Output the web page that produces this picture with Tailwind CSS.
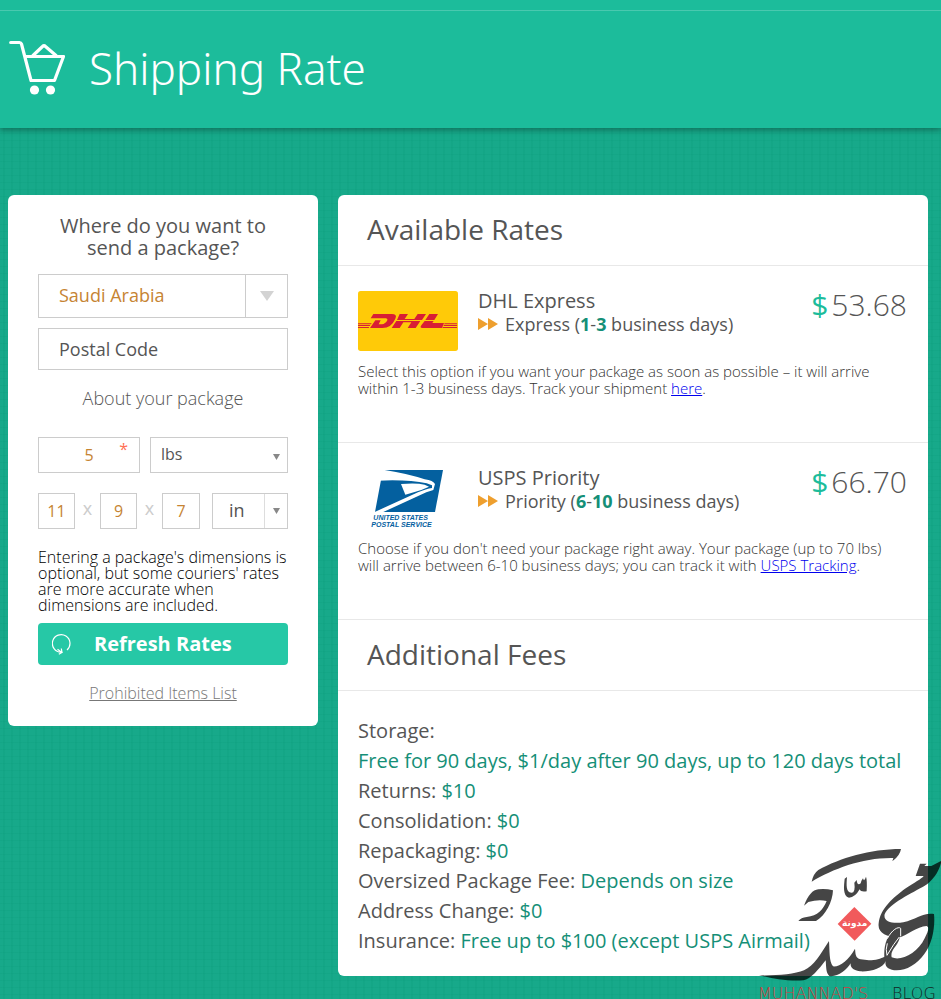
<!DOCTYPE html>
<html lang="en">
<head>
<meta charset="utf-8">
<meta name="viewport" content="width=device-width, initial-scale=1">
<title>Shipping Rate</title>
<script src="https://cdn.jsdelivr.net/npm/@tailwindcss/browser@4"></script>
</head>
<body class="bg-[#17a98a] font-['Open_Sans',sans-serif] font-light text-[#555]">
<div class="relative min-h-screen overflow-hidden bg-[linear-gradient(to_right,#0c9c7d40_2px,transparent_2px),linear-gradient(to_bottom,#0c9c7d40_1px,transparent_1px)] bg-[size:8px_7px] bg-[position:3px_0px]">
  <header class="relative bg-[#1cbc9b] pt-[10px] shadow-[0_2px_6px_rgba(0,0,0,0.35)]">
    <div class="flex h-[118px] items-center gap-6 border-t border-[#49c9af] pb-1 pl-[9px]">
      <svg class="h-[56px] w-[56px]" viewBox="0 0 56 56" fill="none" stroke="#fff" stroke-width="3.2" stroke-linecap="round" stroke-linejoin="round" aria-hidden="true">
        <path d="M1.700 2.500H10.500Q12 2.500 12.500 4L22 40.500H45.500L54.500 16.500H16"/><path d="M24 15.500L33.500 6.500Q35 5 36.500 6.500L47 15.500"/>
        <circle cx="25.500" cy="50" r="4.600" fill="#fff" stroke="none"/><circle cx="41.500" cy="50" r="4.600" fill="#fff" stroke="none"/>
      </svg>
      <h1 class="font-['Noto_Sans',sans-serif] text-[44px] leading-[60px] font-light text-white">Shipping Rate</h1>
    </div>
  </header>

  <main class="flex items-start gap-5 pt-[67px] pr-[13px] pb-[23px] pl-2">
    <form class="w-[310px] shrink-0 rounded-md bg-white px-[30px] pt-5 pb-[21px]">
      <h2 class="px-4 text-center text-[20px] leading-[22px] font-normal">Where do you want to send a package?</h2>
      <div class="relative mt-[15px]">
        <select aria-label="Country" class="h-11 w-full appearance-none border border-[#ccc] bg-white pb-[2px] pl-5 text-[18px] font-normal text-[#c68433]"><option>Saudi Arabia</option></select>
        <span class="pointer-events-none absolute inset-y-0 right-0 flex w-[43px] items-center justify-center border border-[#ccc]"><svg class="h-[10px] w-[14px]" viewBox="0 0 14 10" aria-hidden="true"><path d="M0 0H14L7 10Z" fill="#d3d3d3"/></svg></span>
      </div>
      <input aria-label="Postal Code" placeholder="Postal Code" class="mt-[10px] block h-[42px] w-full border border-[#ccc] px-5 text-[18px] font-normal placeholder:text-[#555]">
      <h3 class="mt-4 text-center text-[18px] leading-6">About your package</h3>
      <div class="mt-[27px] flex gap-[10px]">
        <div class="relative w-[102px]">
          <input aria-label="Weight" value="5" class="block h-9 w-full border border-[#ccc] text-center text-[16px] font-normal text-[#c68433]">
          <span class="absolute top-[2px] right-3 text-[16px] leading-5 font-normal text-[#ff7054]">*</span>
        </div>
        <div class="relative flex-1">
          <select aria-label="Weight unit" class="block h-9 w-full appearance-none border border-[#ccc] bg-white pb-[2px] pl-[10px] text-[16px] font-normal text-[#555]"><option>lbs</option></select>
          <span class="pointer-events-none absolute inset-y-0 right-2 flex items-center pt-1"><svg class="h-[6px] w-[7px]" viewBox="0 0 7 6" aria-hidden="true"><path d="M0 0H7L3.500 6Z" fill="#888"/></svg></span>
        </div>
      </div>
      <div class="mt-5 flex items-center">
        <input aria-label="Length" value="11" class="h-9 w-[37px] border border-[#ccc] text-center text-[16px] font-normal text-[#c68433]">
        <span class="flex-1 pb-[6px] text-center text-[18px] font-normal text-[#ccc]">x</span>
        <input aria-label="Width" value="9" class="h-9 w-[37px] border border-[#ccc] text-center text-[16px] font-normal text-[#c68433]">
        <span class="flex-1 pb-[6px] text-center text-[18px] font-normal text-[#ccc]">x</span>
        <input aria-label="Height" value="7" class="h-9 w-[38px] border border-[#ccc] text-center text-[16px] font-normal text-[#c68433]">
        <div class="relative ml-3 w-[76px]">
          <select aria-label="Dimension unit" class="block h-9 w-full appearance-none border border-[#ccc] bg-white pb-[2px] pl-4 text-[18px] font-normal text-[#555]"><option>in</option></select>
          <span class="pointer-events-none absolute inset-y-px right-px flex w-[23px] items-center justify-center border-l border-[#ddd]"><svg class="h-[6px] w-[7px]" viewBox="0 0 7 6" aria-hidden="true"><path d="M0 0H7L3.500 6Z" fill="#888"/></svg></span>
        </div>
      </div>
      <p class="mt-5 text-[16px] leading-4 text-black">Entering a package's dimensions is optional, but some couriers' rates are more accurate when dimensions are included.</p>
      <button type="button" class="mt-[10px] flex h-[42px] w-full items-center rounded bg-[#26c8a6] pl-[14px] text-[20px] font-bold text-white">
        <svg class="mr-[22px] h-[22px] w-5" viewBox="0 0 20 22" fill="none" stroke="#fff" stroke-width="1.200" aria-hidden="true"><path d="M15 17A8.800 8.800 0 1 0 9 19.200M5.500 16.300L10 19.400L6.800 21.300M10 19.400L9.300 15.500"/></svg>
        Refresh Rates
      </button>
      <p class="mt-4 text-center text-[16px] leading-6"><a href="#" class="text-[#777] underline">Prohibited Items List</a></p>
    </form>

    <section class="min-w-0 flex-1 rounded-md bg-white pb-5">
      <h2 class="border-b border-[#e8e8e8] pt-4 pb-[18px] pl-[29px] text-[28px] leading-9 font-normal">Available Rates</h2>
      <article class="h-[177px] border-b border-[#e8e8e8] px-5 pt-[25px]">
        <div class="flex h-[60px]">
          <svg class="h-[60px] w-[100px] shrink-0" viewBox="0 0 300 180" role="img" aria-label="DHL">
            <rect width="300" height="180" rx="8" fill="#ffca08"/>
            <g fill="#d81e35">
              <path d="M46 69H101Q119 69 112 83Q100 111 73 111H36L52 88H68L62 100H72Q82 99 88 88Q90 83 84 82H38Z"/>
              <path d="M125 69H150L140 84H169L179 69H204L192 87H117ZM115 90H187L173 111H149L160 94H136L125 111H101Z"/>
              <path d="M214 69H240L229 87H202ZM200 90H227L223 96H258L252 111H193Q184 111 190 103Z"/>
              <path d="M0 97H41L39 100H0ZM0 102H37L35 105H0ZM0 108H34L32 111H0ZM260 97H297V100H258ZM258 102H297V105H256ZM255 108H297V111H253Z"/>
            </g>
          </svg>
          <div class="ml-5 min-w-0 flex-1">
            <h3 class="-mt-[2px] text-[20px] leading-6 font-normal">DHL Express</h3>
            <p class="flex items-center text-[18px] leading-[22px] font-normal"><svg class="mr-[7px] h-3 w-5" viewBox="0 0 20 12" fill="#ee9f2e" aria-hidden="true"><path d="M0 0L10 6L0 12ZM10 0L20 6L10 12Z"/></svg><span>Express (<b class="font-bold text-[#158f77]">1</b>-<b class="font-bold text-[#158f77]">3</b> business days)</span></p>
          </div>
          <p class="pr-px text-[30px] leading-7"><span class="mr-[3px] font-normal text-[#1cbc9b]">$</span>53.68</p>
        </div>
        <p class="mt-3 text-[15px] leading-[17px] text-[#333]">Select this option if you want your package as soon as possible – it will arrive<br>within 1-3 business days. Track your shipment <a href="#" class="text-[#0000ee] underline">here</a>.</p>
      </article>
      <article class="h-[177px] border-b border-[#e8e8e8] px-5 pt-[25px]">
        <div class="flex h-[60px]">
          <svg class="h-[60px] w-[100px] shrink-0" viewBox="0 0 300 180" role="img" aria-label="United States Postal Service">
            <path d="M80 6H255L231 132H51L69 36Z" fill="#04609f"/>
            <path d="M55 0L80 6Q150 17 200 34Q226 38 231 48L226 66L205 73L76 132H50L180 73Q205 62 222 60V52L206 46Q150 34 60 38Z" fill="#fff"/>
            <path d="M129 48Q175 44 200 50L213 56L190 66L142 80Z" fill="#fff"/>
            <g fill="#04609f" font-family="Liberation Sans, sans-serif" font-weight="bold" font-style="italic" font-size="21"><text x="46" y="155">UNITED STATES</text><text x="40" y="177">POSTAL SERVICE</text></g>
          </svg>
          <div class="ml-5 min-w-0 flex-1">
            <h3 class="-mt-[2px] text-[20px] leading-6 font-normal">USPS Priority</h3>
            <p class="flex items-center text-[18px] leading-[22px] font-normal"><svg class="mr-[7px] h-3 w-5" viewBox="0 0 20 12" fill="#ee9f2e" aria-hidden="true"><path d="M0 0L10 6L0 12ZM10 0L20 6L10 12Z"/></svg><span>Priority (<b class="font-bold text-[#158f77]">6</b>-<b class="font-bold text-[#158f77]">10</b> business days)</span></p>
          </div>
          <p class="pr-px text-[30px] leading-7"><span class="mr-[3px] font-normal text-[#1cbc9b]">$</span>66.70</p>
        </div>
        <p class="mt-3 text-[15px] leading-[17px] text-[#333]">Choose if you don't need your package right away. Your package (up to 70 lbs)<br>will arrive between 6-10 business days; you can track it with <a href="#" class="text-[#0000ee] underline">USPS Tracking</a>.</p>
      </article>
      <h2 class="border-b border-[#e8e8e8] pt-4 pb-[18px] pl-[29px] text-[28px] leading-9 font-normal">Additional Fees</h2>
      <ul class="px-5 pt-[25px] text-[20px] leading-[30px] font-normal">
        <li>Storage:<br><span class="text-[#158f77]">Free for 90 days, $1/day after 90 days, up to 120 days total</span></li>
        <li>Returns: <span class="text-[#158f77]">$10</span></li>
        <li>Consolidation: <span class="text-[#158f77]">$0</span></li>
        <li>Repackaging: <span class="text-[#158f77]">$0</span></li>
        <li>Oversized Package Fee: <span class="text-[#158f77]">Depends on size</span></li>
        <li>Address Change: <span class="text-[#158f77]">$0</span></li>
        <li>Insurance: <span class="text-[#158f77]">Free up to $100 (except USPS Airmail)</span></li>
      </ul>
    </section>
  </main>

  <svg class="pointer-events-none absolute right-0 bottom-0 h-[169px] w-[201px]" viewBox="0 0 603 507" role="img" aria-label="Muhannad's Blog">
    <g fill="#000" fill-opacity="0.73">
      <path d="M215 155Q220 131 235 120C300 84 390 57 483 57Q480 77 457 94L460 84C370 82 280 116 215 155Z"/>
      <path d="M314 146L321 141C319 165 318 187 334 188Q347 189 343 158L350 150Q352 169 362 160Q366 149 362 156L369 145Q372 158 378 140Q382 151 380 184Q362 187 359 178Q345 203 327 203C307 197 312 166 314 146Z"/>
      <path d="M192 227Q210 180 235 178Q256 175 279 181C278 214 257 257 228 273H175Q183 263 200 261C233 258 250 238 260 213Q234 208 205 216Z"/>
      <path d="M527 138L540 101H560L553 108H574L603 93V99C596 128 575 155 553 168C520 187 445 222 434 253C429 275 457 282 490 277C530 268 548 247 582 252C586 290 577 342 553 372C530 403 500 421 470 421C445 420 433 409 437 393C430 415 390 426 360 424C334 419 331 408 332 400C321 420 290 443 268 438C257 428 259 410 257 391C237 417 212 448 190 451C145 455 95 444 57 436C110 437 163 433 192 421C222 407 240 375 267 333C269 360 267 395 279 409C300 411 325 391 345 356C347 371 345 383 362 388C392 394 420 388 433 380C431 350 440 308 470 296C488 288 481 310 478 328C471 350 450 361 455 382C482 395 533 370 554 325C566 302 568 291 560 288C530 290 505 315 473 324C440 318 412 310 416 280C420 235 463 200 495 176C524 157 544 147 551 138Z"/>
    </g>
    <path d="M442 340Q436 358 441 376Q462 340 478 321M442 326C455 300 475 288 482 295V319" fill="none" stroke="#fff" stroke-width="3"/>
    <path d="M343 231L394 281L344 332L293 282Z" fill="#f15a5c"/>
    <text x="344" y="289" text-anchor="middle" font-family="DejaVu Sans, sans-serif" font-size="27" font-weight="bold" fill="#fff" direction="rtl">مدونة</text>
    <g font-family="DejaVu Sans, sans-serif" font-size="48" font-weight="200"><text x="54" y="507" fill="#d03c3f">MUHANNAD'S</text><text x="456" y="507" fill="#10251f">BLOG</text></g>
  </svg>
</div>
</body>
</html>
